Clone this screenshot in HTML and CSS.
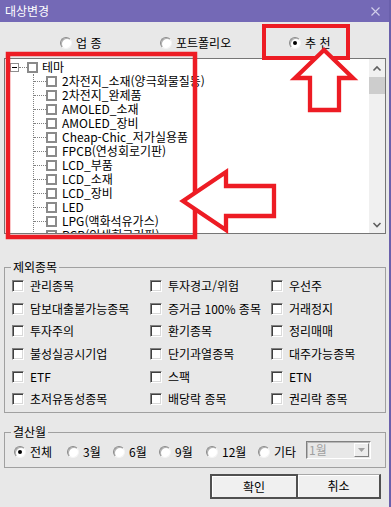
FILE: index.html
```html
<!DOCTYPE html>
<html lang="ko">
<head>
<meta charset="utf-8">
<title>대상변경</title>
<link rel="stylesheet" href="styles.css">
</head>
<body>
<div class="window">
  <div class="titlebar">
    <span class="title">대상변경</span>
    <svg class="close" width="9" height="9" viewBox="0 0 9 9"><path d="M0.5 0.5 L8.5 8.5 M8.5 0.5 L0.5 8.5" stroke="#d2cfea" stroke-width="1.1" fill="none"/></svg>
  </div>
  <div class="content">
    <div class="toprow">
      <label class="opt opt-a"><span class="radio"></span>업 종</label>
      <label class="opt opt-b"><span class="radio"></span>포트폴리오</label>
      <label class="opt"><span class="radio checked"></span>추 천</label>
    </div>

    <div class="tree">
      <div class="tree-body">
        <div class="node root"><span class="expander"></span><span class="hline short"></span><span class="tbox"></span><span class="label">테마</span></div>
        <div class="children">
          <div class="node"><span class="hline"></span><span class="tbox"></span><span class="label">2차전지_소재(양극화물질등)</span></div>
          <div class="node"><span class="hline"></span><span class="tbox"></span><span class="label">2차전지_완제품</span></div>
          <div class="node"><span class="hline"></span><span class="tbox"></span><span class="label">AMOLED_소재</span></div>
          <div class="node"><span class="hline"></span><span class="tbox"></span><span class="label">AMOLED_장비</span></div>
          <div class="node"><span class="hline"></span><span class="tbox"></span><span class="label">Cheap-Chic_저가실용품</span></div>
          <div class="node"><span class="hline"></span><span class="tbox"></span><span class="label">FPCB(연성회로기판)</span></div>
          <div class="node"><span class="hline"></span><span class="tbox"></span><span class="label">LCD_부품</span></div>
          <div class="node"><span class="hline"></span><span class="tbox"></span><span class="label">LCD_소재</span></div>
          <div class="node"><span class="hline"></span><span class="tbox"></span><span class="label">LCD_장비</span></div>
          <div class="node"><span class="hline"></span><span class="tbox"></span><span class="label">LED</span></div>
          <div class="node"><span class="hline"></span><span class="tbox"></span><span class="label">LPG(액화석유가스)</span></div>
          <div class="node"><span class="hline"></span><span class="tbox"></span><span class="label">PCB(인쇄회로기판)</span></div>
        </div>
      </div>
      <div class="scrollbar">
        <div class="sb-btn"><svg width="16" height="18" viewBox="0 0 16 18"><polyline points="4.5,11.5 8,8 11.5,11.5" fill="none" stroke="#606060" stroke-width="1.6"/></svg></div>
        <div class="thumb"></div>
        <div class="sb-track"></div>
        <div class="sb-btn"><svg width="16" height="17" viewBox="0 0 16 17"><polyline points="4.5,7 8,10.5 11.5,7" fill="none" stroke="#606060" stroke-width="1.6"/></svg></div>
      </div>
    </div>

    <div class="group g1">
      <span class="legend">제외종목</span>
      <label class="chk"><span class="cbox"></span>관리종목</label>
      <label class="chk"><span class="cbox"></span>투자경고/위험</label>
      <label class="chk"><span class="cbox"></span>우선주</label>
      <label class="chk"><span class="cbox"></span>담보대출불가능종목</label>
      <label class="chk"><span class="cbox"></span>증거금 100% 종목</label>
      <label class="chk"><span class="cbox"></span>거래정지</label>
      <label class="chk"><span class="cbox"></span>투자주의</label>
      <label class="chk"><span class="cbox"></span>환기종목</label>
      <label class="chk"><span class="cbox"></span>정리매매</label>
      <label class="chk"><span class="cbox"></span>불성실공시기업</label>
      <label class="chk"><span class="cbox"></span>단기과열종목</label>
      <label class="chk"><span class="cbox"></span>대주가능종목</label>
      <label class="chk"><span class="cbox"></span>ETF</label>
      <label class="chk"><span class="cbox"></span>스팩</label>
      <label class="chk"><span class="cbox"></span>ETN</label>
      <label class="chk"><span class="cbox"></span>초저유동성종목</label>
      <label class="chk"><span class="cbox"></span>배당락 종목</label>
      <label class="chk"><span class="cbox"></span>권리락 종목</label>
    </div>

    <div class="group g2">
      <span class="legend">결산월</span>
      <label class="ropt w53"><span class="radio checked"></span>전체</label>
      <label class="ropt w46"><span class="radio"></span>3월</label>
      <label class="ropt w46"><span class="radio"></span>6월</label>
      <label class="ropt w47"><span class="radio"></span>9월</label>
      <label class="ropt w52"><span class="radio"></span>12월</label>
      <label class="ropt w48"><span class="radio"></span>기타</label>
      <div class="combo"><span class="combo-text">1월</span><span class="combo-btn"><svg width="7" height="4" viewBox="0 0 7 4"><polygon points="0,0 7,0 3.5,4" fill="#a0a0a0"/></svg></span></div>
    </div>

    <div class="buttons">
      <div class="btn ok">확인</div>
      <div class="btn cancel">취소</div>
    </div>
  </div>

  <svg class="overlay" width="391" height="507" viewBox="0 0 391 507">
    <rect x="264" y="26" width="84" height="32" fill="none" stroke="#ed1c24" stroke-width="4"/>
    <rect x="8" y="54" width="187" height="183" fill="none" stroke="#ed1c24" stroke-width="4.5"/>
    <polygon points="324,50 353,78 339,78 339,110 310,110 310,78 295,78" fill="#fff" stroke="#ed1c24" stroke-width="4.3"/>
    <polygon points="183,201 226,172 226,186 274,186 274,216 226,216 226,230" fill="#fff" stroke="#ed1c24" stroke-width="4.3"/>
  </svg>
</div>
</body>
</html>
```

FILE: styles.css
```css
* { box-sizing: border-box; }
html, body { margin: 0; padding: 0; }
body {
  background: #e8e8e8;
  font-family: "Noto Sans CJK KR", "Noto Sans", sans-serif;
  font-size: 12px;
  line-height: 14px;
  color: #000;
}
.window {
  position: relative;
  width: 391px;
  height: 507px;
  background: #e8e8e8;
  border-right: 2px solid #6a60ac;
  overflow: hidden;
}
.titlebar {
  height: 22px;
  background: #7469b6;
  display: flex;
  align-items: center;
  justify-content: space-between;
  padding: 0 9px 0 5px;
}
.title { color: #fff; font-size: 12px; }
.close { display: block; }

.content { padding: 0 3px 0 4px; }

.toprow {
  display: flex;
  align-items: center;
  height: 16px;
  margin: 13px 0 7px;
  padding-left: 56px;
}
.opt { display: flex; align-items: center; white-space: nowrap; }
.opt-a { width: 100px; }
.opt-b { width: 129px; }

.radio {
  position: relative;
  flex: none;
  width: 12px;
  height: 12px;
  border-radius: 50%;
  background: #fff;
  border: 1px solid;
  border-color: #8a8a8a #f4f4f4 #f4f4f4 #8a8a8a;
  box-shadow: inset 1px 1px 0 #b0b0b0;
  margin-right: 4px;
}
.radio.checked::after {
  content: "";
  position: absolute;
  left: 3px;
  top: 3px;
  width: 4px;
  height: 4px;
  border-radius: 50%;
  background: #000;
}

.tree {
  display: flex;
  height: 176px;
  border: 1px solid #767676;
  background: #fff;
  overflow: hidden;
}
.tree-body {
  flex: 1;
  padding-left: 5px;
  padding-top: 1px;
  overflow: hidden;
}
.node {
  display: flex;
  align-items: center;
  height: 14px;
  white-space: nowrap;
}
.expander {
  position: relative;
  flex: none;
  width: 9px;
  height: 9px;
  border: 1px solid #8e8e8e;
  background: #fff;
}
.expander::after {
  content: "";
  position: absolute;
  left: 1px;
  top: 3px;
  width: 5px;
  height: 1px;
  background: #000;
}
.hline {
  flex: none;
  width: 12px;
  height: 0;
  border-top: 1px dotted #808080;
}
.hline.short { width: 8px; }
.tbox {
  flex: none;
  width: 11px;
  height: 11px;
  border: 2px solid #8a8a8a;
  background: #fff;
  margin-right: 5px;
}
.root .tbox { margin-right: 4px; }
.children {
  margin-left: 23px;
  border-left: 1px dotted #808080;
}
.scrollbar {
  flex: none;
  width: 16px;
  background: #f0f0f0;
  display: flex;
  flex-direction: column;
}
.sb-btn { flex: none; line-height: 0; }
.sb-btn svg { display: block; }
.thumb { flex: none; height: 17px; background: #cdcdcd; }
.sb-track { flex: 1; }

.group {
  position: relative;
  border: 1px solid #a0a0a0;
}
.legend {
  position: absolute;
  top: -8px;
  left: 6px;
  padding: 0 2px;
  background: #e8e8e8;
  line-height: 14px;
  white-space: nowrap;
}
.g1 {
  margin-top: 33px;
  height: 146px;
  padding: 7px 0 0 7px;
  display: grid;
  grid-template-columns: 138px 121px 1fr;
  grid-auto-rows: 22.6px;
}
.chk { display: flex; align-items: center; white-space: nowrap; }
.cbox {
  flex: none;
  width: 12px;
  height: 12px;
  background: #fff;
  border: 1px solid;
  border-color: #808080 #fff #fff #808080;
  box-shadow: inset 1px 1px 0 #404040, inset -1px -1px 0 #d8d8d8;
  margin-right: 6px;
}

.g2 {
  margin-top: 19px;
  height: 36px;
  padding: 12px 0 0 9px;
  display: flex;
  align-items: flex-start;
}
.ropt { display: flex; align-items: center; height: 14px; white-space: nowrap; flex: none; }
.w53 { width: 53px; }
.w46 { width: 46px; }
.w47 { width: 47px; }
.w52 { width: 52px; }
.w48 { width: 48px; }
.combo {
  flex: none;
  display: flex;
  align-items: center;
  justify-content: space-between;
  width: 65px;
  height: 18px;
  margin-top: -4px;
  border: 1px solid;
  border-color: #808080 #fff #fff #808080;
  box-shadow: inset 1px 1px 0 #b8b8b8;
  background: #e8e8e8;
  padding: 0 1px 0 2px;
}
.combo-text { color: #a0a0a0; }
.combo-btn {
  display: flex;
  align-items: center;
  justify-content: center;
  width: 15px;
  height: 14px;
  background: #ececec;
  border: 1px solid;
  border-color: #fff #808080 #808080 #fff;
}

.buttons {
  display: flex;
  justify-content: flex-end;
  margin-top: 6px;
  padding-right: 5px;
}
.btn {
  height: 25px;
  display: flex;
  align-items: center;
  justify-content: center;
  background: #f0f0f0;
}
.btn.ok {
  width: 88px;
  border: 2px solid #505050;
  box-shadow: inset 1px 1px 0 #fff;
}
.btn.cancel {
  width: 83px;
  border-style: solid;
  border-width: 1px 2px 2px 0;
  border-color: #a8a8a8 #505050 #505050 #505050;
  box-shadow: inset 1px 1px 0 #fff;
}

.overlay {
  position: absolute;
  left: 0;
  top: 0;
  pointer-events: none;
}
```
